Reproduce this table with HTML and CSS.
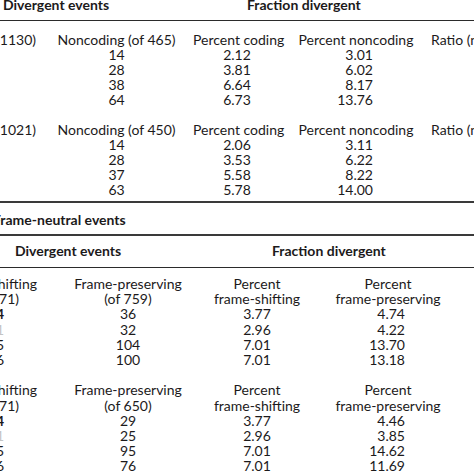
FILE: index.html
```html
<!DOCTYPE html>
<html>
<head>
<meta charset="utf-8">
<link rel="stylesheet" href="styles.css">
</head>
<body>
<div class="page">
  <section class="t1">
    <div class="t1-head">
      <span class="h1-div">Divergent events</span>
      <span class="h1-frac">Fraction divergent</span>
    </div>
    <div class="t1-body">
      <span class="c-frag">1130)</span><span class="c-c">Noncoding (of 465)</span><span class="c-c">Percent coding</span><span class="c-c">Percent noncoding</span><span class="c-l">Ratio (n</span>
      <span></span><span class="c-c">14</span><span class="c-c">2.12</span><span class="c-num">3.01</span><span></span>
      <span></span><span class="c-c">28</span><span class="c-c">3.81</span><span class="c-num">6.02</span><span></span>
      <span></span><span class="c-c">38</span><span class="c-c">6.64</span><span class="c-num">8.17</span><span></span>
      <span></span><span class="c-c">64</span><span class="c-c">6.73</span><span class="c-num">13.76</span><span></span>
      <span class="blank"></span>
      <span class="c-frag">1021)</span><span class="c-c">Noncoding (of 450)</span><span class="c-c">Percent coding</span><span class="c-c">Percent noncoding</span><span class="c-l">Ratio (n</span>
      <span></span><span class="c-c">14</span><span class="c-c">2.06</span><span class="c-num">3.11</span><span></span>
      <span></span><span class="c-c">28</span><span class="c-c">3.53</span><span class="c-num">6.22</span><span></span>
      <span></span><span class="c-c">37</span><span class="c-c">5.58</span><span class="c-num">8.22</span><span></span>
      <span></span><span class="c-c">63</span><span class="c-c">5.78</span><span class="c-num">14.00</span><span></span>
    </div>
  </section>
  <section class="t2">
    <div class="t2-title">Frame-neutral events</div>
  </section>
  <section class="t3">
    <div class="t3-head">
      <span class="h3-div">Divergent events</span>
      <span class="h3-frac">Fraction divergent</span>
    </div>
    <div class="t3-body">
      <span class="f f-word">hifting</span><span class="c-c">Frame-preserving</span><span class="c-c">Percent</span><span class="c-c">Percent</span>
      <span class="f f-of">71)</span><span class="c-c">(of 759)</span><span class="c-c">frame-shifting</span><span class="c-c">frame-preserving</span>
      <span class="f f-dig f-bold">4</span><span class="c-c">36</span><span class="c-c">3.77</span><span class="c-num3">4.74</span>
      <span class="f f-dig f-gray">1</span><span class="c-c">32</span><span class="c-c">2.96</span><span class="c-num3">4.22</span>
      <span class="f f-dig">5</span><span class="c-c">104</span><span class="c-c">7.01</span><span class="c-num3">13.70</span>
      <span class="f f-dig">6</span><span class="c-c">100</span><span class="c-c">7.01</span><span class="c-num3">13.18</span>
      <span class="blank"></span>
      <span class="f f-word">hifting</span><span class="c-c">Frame-preserving</span><span class="c-c">Percent</span><span class="c-c">Percent</span>
      <span class="f f-of">71)</span><span class="c-c">(of 650)</span><span class="c-c">frame-shifting</span><span class="c-c">frame-preserving</span>
      <span class="f f-dig f-bold">4</span><span class="c-c">29</span><span class="c-c">3.77</span><span class="c-num3">4.46</span>
      <span class="f f-dig f-gray">1</span><span class="c-c">25</span><span class="c-c">2.96</span><span class="c-num3">3.85</span>
      <span class="f f-dig">5</span><span class="c-c">95</span><span class="c-c">7.01</span><span class="c-num3">14.62</span>
      <span class="f f-dig">6</span><span class="c-c">76</span><span class="c-c">7.01</span><span class="c-num3">11.69</span>
    </div>
  </section>
</div>
</body>
</html>
```
FILE: styles.css
```css
html, body {
  margin: 0;
  padding: 0;
  overflow: hidden;
  background: #ffffff;
}

body {
  width: 474px;
  height: 474px;
  font-family: "Lato", "Open Sans", "DejaVu Sans", sans-serif;
  font-size: 14px;
  color: #1c1a1b;
  white-space: nowrap;
}

.page {
  width: 474px;
}

/* ---------- top table ---------- */
.t1-head {
  display: flex;
  margin-top: -3px;
  padding-bottom: 8px;
  line-height: 15px;
  font-weight: 700;
  border-bottom: 1px solid #2b2b2b;
}

.h1-div {
  width: 247px;
  padding-left: 3px;
  box-sizing: border-box;
}

.t1-body {
  display: grid;
  grid-template-columns: 40px 153px 88px 150px 60px;
  line-height: 15px;
  padding-top: 11px;
  padding-bottom: 4px;
  border-bottom: 2px solid #3a3a3a;
}

.blank {
  grid-column: 1 / -1;
  height: 15px;
}

.t3-body .blank {
  height: 15.2px;
}

.c-c {
  text-align: center;
}

.c-l {
  text-align: left;
}

.c-num {
  text-align: right;
  padding-right: 58px;
}

.c-frag {
  display: flex;
  justify-content: flex-end;
  padding-right: 4px;
}

/* ---------- section title ---------- */
.t2 {
  padding-top: 9px;
  padding-bottom: 7px;
  border-bottom: 2px solid #3a3a3a;
  line-height: 15px;
}

.t2-title {
  margin-left: -7px;
  font-weight: 700;
}

/* ---------- bottom table ---------- */
.t3-head {
  display: flex;
  padding-top: 7px;
  padding-bottom: 8.8px;
  line-height: 15.2px;
  font-weight: 700;
  border-bottom: 1px solid #2b2b2b;
}

.h3-div {
  width: 272px;
  padding-left: 15px;
  box-sizing: border-box;
}

.t3-body {
  display: grid;
  grid-template-columns: 44px 168px 90px 172px;
  line-height: 15.2px;
  padding-top: 8px;
}

.c-num3 {
  text-align: right;
  padding-right: 69px;
}

.f {
  display: flex;
  justify-content: flex-end;
}

.f-word {
  padding-right: 7px;
}

.f-of {
  padding-right: 25px;
}

.f-dig {
  padding-right: 40px;
}

.f-bold {
  font-weight: 700;
}

.f-gray {
  color: #c4c4c4;
}
```
